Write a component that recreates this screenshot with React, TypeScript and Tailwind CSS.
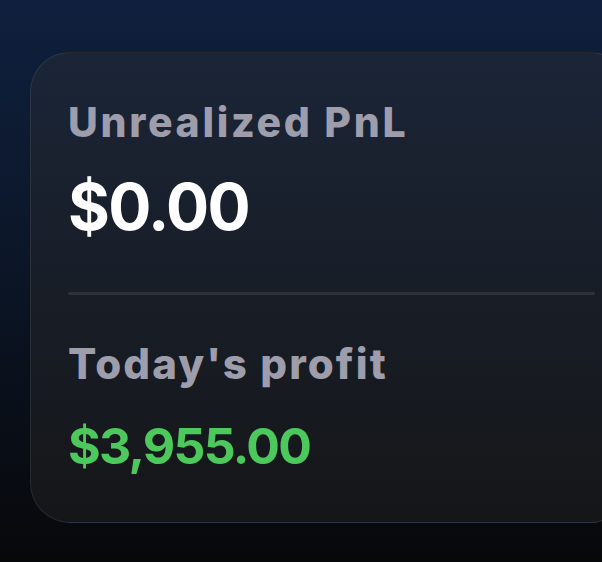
export default function App() {
  return (
    <div className="h-[562px] w-full overflow-hidden bg-gradient-to-b from-[#0f203e] via-[#0b1526] to-[#07080a] pl-[30px] pt-[52px] font-['Inter',sans-serif]">
      {/* PnL card, runs off the right edge */}
      <div className="w-[600px] h-[471px] rounded-[40px] border border-white/[0.08] bg-gradient-to-b from-[#1b2537] to-[#151618] pl-[37px] pr-[34px] pt-[49px]">
        <p className="text-[41px] leading-[41px] font-extrabold text-[#9d9dab] tracking-[0.065em]">Unrealized PnL</p>
        <p className="mt-[32px] text-[64px] leading-[64px] font-bold text-white tracking-[-0.025em]">$0.00</p>
        <div className="mt-[53px] h-[3px] rounded-full bg-[#2e323a]" />
        <p className="mt-[48px] text-[42px] leading-[42px] font-extrabold text-[#9d9dab] tracking-[0.05em]">Today's profit</p>
        <p className="mt-[36px] text-[50px] leading-[50px] font-bold text-[#4cc85d] tracking-[-0.035em]">$3,955.00</p>
      </div>
    </div>
  )
}
